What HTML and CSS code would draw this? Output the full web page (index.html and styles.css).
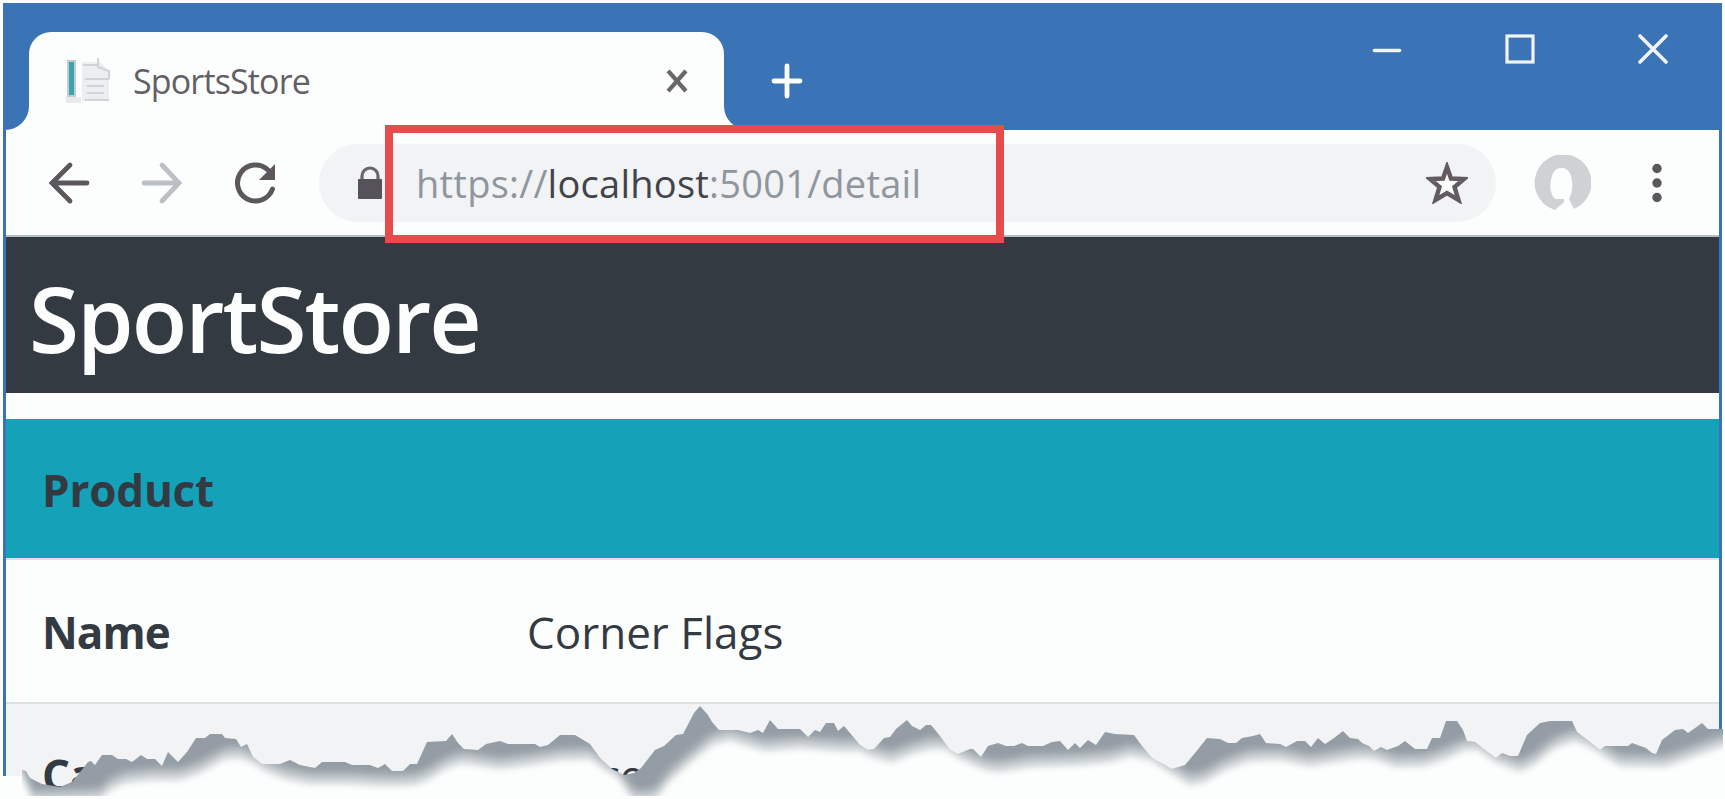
FILE: index.html
```html
<!DOCTYPE html>
<html lang="en">
<head>
<meta charset="utf-8">
<title>SportsStore</title>
<link rel="stylesheet" href="styles.css">
</head>
<body>
<div class="window">
  <header class="tabstrip">
    <div class="tab">
      <svg class="favicon" width="48" height="48" viewBox="0 0 48 48">
        <path d="M1 40H16V46H1Z" fill="#e8eaec"/>
        <rect x="2" y="3" width="9" height="37" fill="#c6cbd0"/>
        <rect x="4" y="5" width="5" height="33" fill="#3aa3b4"/>
        <path d="M17 5H35L44 14V44H17Z" fill="#eceeef"/>
        <path d="M33 1V10L44 14V22" fill="none" stroke="#d0d3d7" stroke-width="2"/>
        <path d="M20 22H44M20 43H44M22 29H39M22 36H39M18 8H34" fill="none" stroke="#cfd2d6" stroke-width="2"/>
      </svg>
      <span class="tab-title">SportsStore</span>
      <svg class="tab-close" width="22" height="24" viewBox="0 0 22 24"><path d="M3.500 3.500L18.500 20.500M18.500 3.500L3.500 20.500" stroke="#6b6669" stroke-width="4.200" stroke-linecap="square"/></svg>
      <svg class="flare flare-left" width="24" height="24"><path d="M24 0V24H0A24 24 0 0 0 24 0Z" fill="#fcfefd"/></svg>
      <svg class="flare flare-right" width="24" height="24"><path d="M0 0V24H24A24 24 0 0 1 0 0Z" fill="#fcfefd"/></svg>
    </div>
    <svg class="new-tab" width="34" height="36" viewBox="0 0 34 36"><path d="M4 18H30M17 3V33" stroke="#fcfefd" stroke-width="4.800" stroke-linecap="round"/></svg>
    <div class="controls">
      <svg width="30" height="30" viewBox="0 0 30 30"><path d="M2.500 16.500H27.500" stroke="#f2f4f4" stroke-width="3.600" stroke-linecap="round"/></svg>
      <svg width="30" height="30" viewBox="0 0 30 30"><rect x="2" y="2" width="26" height="26" fill="none" stroke="#f2f4f4" stroke-width="3.200"/></svg>
      <svg width="30" height="30" viewBox="0 0 30 30"><path d="M2 2L28 28M28 2L2 28" stroke="#f2f4f4" stroke-width="3.600" stroke-linecap="round"/></svg>
    </div>
  </header>

  <nav class="toolbar">
    <svg class="back" width="44" height="44" viewBox="0 0 44 44"><path d="M40 22H5M23 4L5 22L23 40" fill="none" stroke="#5c575c" stroke-width="4.800" stroke-linecap="round"/></svg>
    <svg class="forward" width="44" height="44" viewBox="0 0 44 44"><path d="M3 22H37M21 4L38 22L21 40" fill="none" stroke="#bbc0c6" stroke-width="4.800" stroke-linecap="round"/></svg>
    <svg class="reload" width="46" height="44" viewBox="0 0 46 44"><path d="M39.500 28A18 18 0 1 1 35 9" fill="none" stroke="#5c575c" stroke-width="5" stroke-linecap="round"/><path d="M42 3V19H26Z" fill="#5c575c"/></svg>
    <div class="omnibox">
      <svg class="lock" width="26" height="34" viewBox="0 0 26 34"><path d="M5 15V10A8 8 0 0 1 21 10V15" fill="none" stroke="#69656a" stroke-width="3.200"/><rect x="1" y="13" width="24" height="20" rx="1" fill="#55525a"/></svg>
      <span class="url">https://<b class="host">localhost</b>:5001/detail</span>
      <svg class="star" width="42" height="42" viewBox="0 0 42 42"><path d="M21 5L25 16.500L38 17L28.500 25L32.500 38L21 31L9.500 38L13.500 25L4 17L17 16.500Z" fill="#fcfefd" stroke="#625c61" stroke-width="4.400"/></svg>
    </div>
    <svg class="avatar" width="58" height="56" viewBox="0 0 58 56"><path d="M22 55A28.500 28.500 0 1 1 41 54L36 44C40 36 40 28 38 21C35 10 22 10 19 21C16 30 17 39 22 44H31V47Z" fill="#cfd2d5"/></svg>
    <svg class="menu" width="12" height="42" viewBox="0 0 12 42"><g fill="#5c575c"><circle cx="6" cy="6.500" r="4.700"/><circle cx="6" cy="21" r="4.700"/><circle cx="6" cy="35.500" r="4.700"/></g></svg>
    <div class="highlight"></div>
  </nav>

  <main class="page">
    <h1 class="brand"><span class="brand-text">SportStore</span></h1>
    <div class="table">
      <div class="row head"><span class="label product">Product</span></div>
      <div class="row"><span class="label name">Name</span><span class="value">Corner Flags</span></div>
      <div class="row striped"><span class="label">Category</span><span class="value soccer">Soccer</span></div>
    </div>
  </main>
</div>

<svg class="torn" width="1725" height="109" viewBox="0 690 1725 109">
  <defs>
    <filter id="soft" x="-2%" y="-30%" width="104%" height="160%"><feGaussianBlur stdDeviation="3"/></filter>
    <filter id="softer" x="-2%" y="-30%" width="104%" height="160%"><feGaussianBlur stdDeviation="4"/></filter>
    <path id="paper" d="M-30 830V765H18L27 783L32 797L100 795L110 785L125 778L150 775L180 775L200 768L225 754L240 753L253 758L265 766L285 774L310 779H350L390 781L415 780L430 774L445 764L462 758L500 764L530 760L560 755L590 754L605 765L618 773L628 788L635 797L655 795L670 776L690 758L712 740L730 735L745 740L765 746L800 743L840 746L860 746L872 752L892 757L912 749L930 744L945 744L960 754L985 765L1000 767L1030 762L1080 760L1110 757L1130 751L1150 755L1172 769L1190 780L1205 777L1225 765L1250 756L1280 755L1310 761L1340 756L1360 753L1375 754L1395 762L1425 761L1445 754L1465 745L1478 745L1495 757L1520 767L1535 759L1555 743L1575 736L1590 742L1605 752L1620 761L1665 762L1690 753L1723 741H1780V830Z"/>
    <clipPath id="edge">
      <path d="M22 770L26 771L30 778L42 784L60 787L72 782L80 772L88 762L91 761L95 765L102 755H112L118 759H126L132 762L141 755L147 759H155L162 766L168 752L178 762L187 752L196 738H205L210 734H222L225 738L236 739L241 747L247 744L253 757L262 764H280L290 760L300 765L315 768L322 762H345L352 765H370L378 768L385 764L392 771H403L410 764H417L427 742L446 741L452 734L458 743L464 749L478 750L486 744L500 741L508 744H535L540 747L548 745L560 735H575L590 744L600 758L612 769L624 775L634 773L641 768L655 750L664 746L676 735L683 734L694 713L700 706L708 715L712 722L719 730H738L750 733L758 730L763 733L770 720L778 729H800L808 737L815 730L820 732L826 723H834L838 731L844 726L850 733L860 745L868 750L874 749L884 738L890 737L896 729L907 720L912 726L920 730L926 725H931L940 736L950 750L958 754L970 749H973L981 757L988 746L998 743L1006 746H1014L1022 743L1028 746H1043L1052 742L1060 741L1068 750L1075 743L1080 748L1088 740L1096 745L1105 732L1115 734L1134 735L1142 746L1152 758L1172 769L1185 765L1195 753L1207 738L1220 739L1228 743H1236L1242 738L1253 736L1260 734L1266 743L1280 744L1286 747L1297 741H1305L1311 747L1318 738L1325 744L1334 738L1343 731L1350 738L1358 739L1362 743L1369 746L1374 751L1381 747L1387 750L1398 746L1405 741L1415 749H1427L1432 738H1440L1446 721H1457L1463 730L1467 741L1475 742L1485 750L1496 758L1502 753L1510 756H1518L1527 735L1540 723L1550 721H1572L1577 732L1590 742L1600 750L1605 746H1628L1632 743L1646 748L1652 753L1656 754L1662 740L1675 730L1683 729L1688 733L1702 723L1708 729H1725V799H22Z"/>
    </clipPath>
  </defs>
  <path d="M0 776H22V770L30 799H0Z" fill="#fcfefd"/>
  <g clip-path="url(#edge)">
    <rect x="22" y="690" width="1703" height="109" fill="#949da5"/>
    <use href="#paper" y="-5" fill="#fcfefd" opacity="0.550" filter="url(#softer)"/>
    <use href="#paper" y="5" fill="#fcfefd" filter="url(#soft)"/>
  </g>
  <path d="M1723 690H1725V799H1723ZM0 796H1725V799H0Z" fill="#fcfefd"/>
</svg>
</body>
</html>
```

FILE: styles.css
```css
* { box-sizing: border-box; }

body {
  margin: 0;
  padding: 3px 3px 0;
  height: 799px;
  overflow: hidden;
  position: relative;
  background: #fcfefd;
  font-family: "Open Sans", "Noto Sans", sans-serif;
  color: #343a42;
}

svg { display: block; flex: none; }

.window {
  height: 796px;
  border: 3px solid #3a73b6;
  border-top: 0;
  border-bottom: 0;
  background: #fcfefd;
}

.tabstrip {
  height: 127px;
  padding: 29px 51px 0 23px;
  display: flex;
  align-items: flex-start;
  background: #3a73b6;
}

.tab {
  position: relative;
  width: 695px;
  height: 98px;
  flex: none;
  display: flex;
  align-items: center;
  padding: 0 36px 0 36px;
  border-radius: 22px 22px 0 0;
  background: #fcfefd;
}
.flare { position: absolute; bottom: 0; }
.flare-left { left: -24px; }
.flare-right { right: -24px; }

.tab-title {
  margin-left: 20px;
  font-size: 34px;
  line-height: 48px;
  letter-spacing: -0.85px;
  color: #625f65;
}
.tab-close { margin-left: auto; }
.new-tab { margin: 31px 0 0 46px; }
.controls {
  display: flex;
  gap: 103px;
  margin: 2px 0 0 auto;
}

.toolbar {
  position: relative;
  height: 107px;
  display: flex;
  align-items: center;
  padding: 0 56px 0 41px;
  border-bottom: 2px solid #b9bcc0;
}
.forward { margin-left: 50px; }
.reload { margin-left: 48px; }

.omnibox {
  width: 1177px;
  height: 78px;
  margin-left: 40px;
  padding: 0 28px 0 38px;
  display: flex;
  align-items: center;
  border-radius: 39px;
  background: #f1f3f4;
}
.url {
  margin-left: 33px;
  font-size: 38px;
  letter-spacing: 0.25px;
  color: #8f969e;
  white-space: nowrap;
}
.host { font-weight: 500; color: #42434b; }
.star { margin-left: auto; }
.avatar { margin-left: 37px; }
.menu { margin-left: auto; }

.highlight {
  position: absolute;
  left: 379px;
  top: -5px;
  width: 619px;
  height: 118px;
  border: 8px solid #e84b4b;
  z-index: 2;
}

.brand {
  margin: 0 0 26px;
  height: 156px;
  padding: 6px 0 0 23px;
  display: flex;
  align-items: center;
  background: #343a42;
  color: #fcfefd;
  font-size: 91px;
  font-weight: 600;
  letter-spacing: -2px;
  line-height: 140px;
}

.row {
  display: flex;
  align-items: center;
  height: 144px;
  padding-left: 36px;
  padding-top: 2px;
  border-top: 2px solid #dee1e4;
  font-size: 44px;
  line-height: 60px;
}
.row.head {
  height: 139px;
  padding-top: 3px;
  border-top: 0;
  background: #15a2b9;
}
.row.striped {
  height: 93px;
  padding-top: 51px;
  line-height: 40px;
  background: #f2f3f4;
}
.label { width: 485px; font-weight: 700; letter-spacing: -0.2px; }
.name { letter-spacing: -0.9px; }

.torn {
  position: absolute;
  left: 0;
  top: 690px;
}
```
